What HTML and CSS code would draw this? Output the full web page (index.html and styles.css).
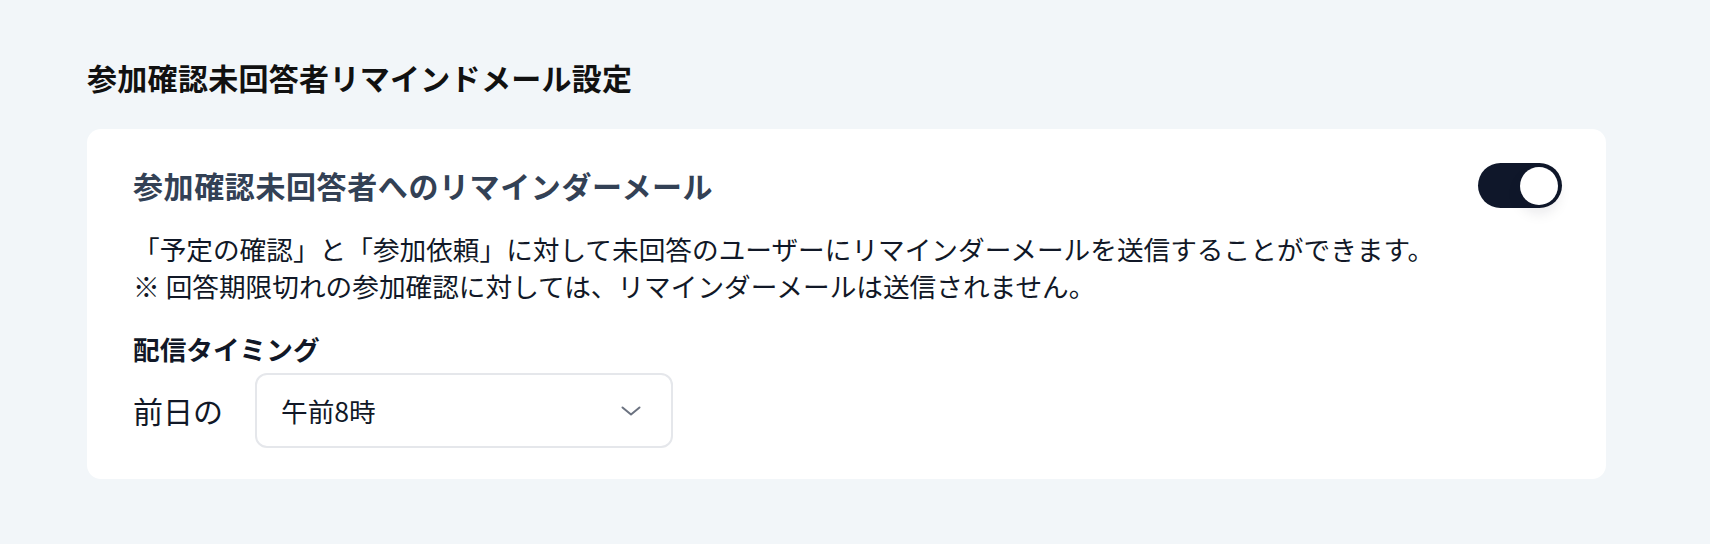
FILE: index.html
```html
<!DOCTYPE html>
<html lang="ja">
<head>
<meta charset="UTF-8">
<meta name="viewport" content="width=device-width, initial-scale=1.0">
<title>参加確認未回答者リマインドメール設定</title>
<link rel="stylesheet" href="styles.css">
</head>
<body>

<div class="page">
  <h1 class="page-title">参加確認未回答者リマインドメール設定</h1>

  <div class="card">
    <div class="card-head">
      <h2 class="card-title">参加確認未回答者へのリマインダーメール</h2>
      <button class="toggle is-on" type="button" aria-pressed="true"><span class="knob"></span></button>
    </div>

    <p class="desc">「予定の確認」と「参加依頼」に対して未回答のユーザーにリマインダーメールを送信することができます。<br>※ 回答期限切れの参加確認に対しては、リマインダーメールは送信されません。</p>

    <p class="label">配信タイミング</p>
    <div class="timing">
      <span class="prefix">前日の</span>
      <div class="select">
        <span>午前8時</span>
        <svg width="20" height="10" viewBox="0 0 20 10" fill="none" stroke="#6b7280" stroke-width="2" stroke-linecap="round" stroke-linejoin="round"><path d="M1.5 1.5 L10 8.5 L18.5 1.5"/></svg>
      </div>
    </div>
  </div>
</div>

</body>
</html>
```

FILE: styles.css
```css
body {
  margin: 0;
  background-color: #f2f6f9;
  color: #111827;
  font-family: "Noto Sans CJK JP", "Noto Sans", sans-serif;
}
.page {
  padding: 55px 104px 0 87px;
}
.page-title {
  margin: 0;
  font-size: 30px;
  line-height: 45px;
  font-weight: 700;
  color: #111111;
  letter-spacing: 0.3px;
}
.card {
  margin-top: 29px;
  background-color: #ffffff;
  border-radius: 14px;
  padding: 34px 44px 31px 46px;
}
.card-head {
  display: flex;
  justify-content: space-between;
  align-items: center;
  height: 45px;
}
.card-title {
  margin: 0;
  font-size: 30px;
  line-height: 45px;
  font-weight: 700;
  color: #334155;
  letter-spacing: 0.6px;
}
.toggle {
  width: 84px;
  height: 45px;
  border: none;
  border-radius: 23px;
  background-color: #0f172a;
  padding: 0 4px;
  display: flex;
  align-items: center;
  justify-content: flex-end;
  cursor: pointer;
}
.knob {
  width: 38px;
  height: 38px;
  border-radius: 50%;
  background-color: #ffffff;
  box-shadow: 0 8px 14px rgba(15, 23, 42, 0.10);
}
.desc {
  margin: 22px 0 0;
  font-size: 26.67px;
  line-height: 37px;
}
.label {
  margin: 26px 0 0;
  font-size: 26.67px;
  line-height: 37px;
  font-weight: 700;
}
.timing {
  margin-top: 6px;
  display: flex;
  align-items: center;
  gap: 32px;
}
.prefix {
  font-size: 30px;
  line-height: 45px;
}
.select {
  box-sizing: border-box;
  width: 418px;
  height: 75px;
  border: 2px solid #e5e7eb;
  border-radius: 12px;
  padding: 0 30px 0 24px;
  display: flex;
  align-items: center;
  justify-content: space-between;
  font-size: 26.67px;
}
```
